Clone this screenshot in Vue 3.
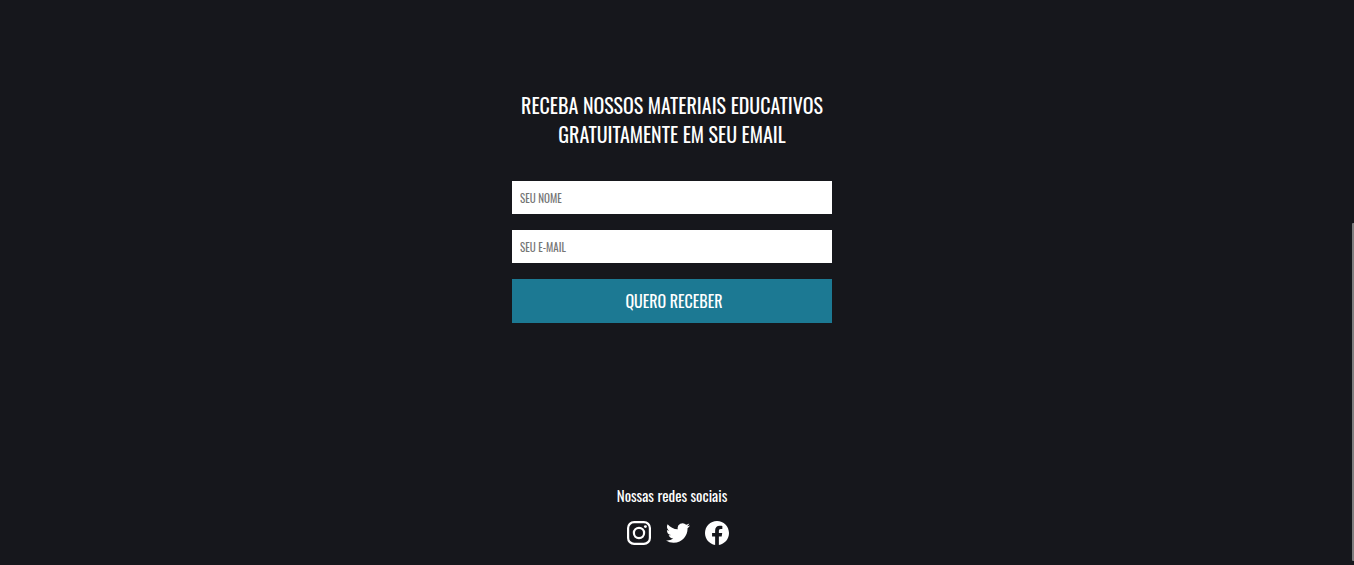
<script setup>
import { ref } from 'vue'

const name = ref('')
const email = ref('')
</script>

<template>
  <div class="page">
    <main class="newsletter">
      <h1 class="title">Receba nossos materiais educativos gratuitamente em seu email</h1>
      <form class="form" @submit.prevent>
        <input v-model="name" class="field" type="text" placeholder="SEU NOME" aria-label="Seu nome" />
        <input v-model="email" class="field" type="email" placeholder="SEU E-MAIL" aria-label="Seu e-mail" />
        <button class="submit" type="submit">QUERO RECEBER</button>
      </form>
    </main>
    <footer class="social">
      <p class="social-title">Nossas redes sociais</p>
      <nav class="links" aria-label="Nossas redes sociais">
        <a href="#" aria-label="Instagram">
          <svg viewBox="0 0 24 24" fill="none" stroke="currentColor">
            <rect x="1.1" y="1.1" width="21.8" height="21.8" rx="6" stroke-width="2.2" />
            <circle cx="12" cy="12" r="5.1" stroke-width="2.2" />
            <circle cx="18.4" cy="5.6" r="1.45" fill="currentColor" stroke="none" />
          </svg>
        </a>
        <a href="#" aria-label="Twitter">
          <svg viewBox="0 0 24 24" fill="currentColor">
            <path d="M23.954 4.569a10 10 0 0 1-2.825.775 4.958 4.958 0 0 0 2.163-2.723 9.99 9.99 0 0 1-3.127 1.184 4.92 4.92 0 0 0-8.384 4.482C7.691 8.094 4.066 6.13 1.64 3.161a4.822 4.822 0 0 0-.666 2.475c0 1.71.87 3.213 2.188 4.096a4.904 4.904 0 0 1-2.228-.616v.061a4.923 4.923 0 0 0 3.946 4.827 4.996 4.996 0 0 1-2.212.085 4.937 4.937 0 0 0 4.604 3.417 9.868 9.868 0 0 1-6.102 2.105c-.39 0-.779-.023-1.17-.067a13.995 13.995 0 0 0 7.557 2.209c9.054 0 13.999-7.496 13.999-13.986 0-.209 0-.42-.015-.63a9.936 9.936 0 0 0 2.46-2.548z" />
          </svg>
        </a>
        <a href="#" aria-label="Facebook">
          <svg viewBox="0 0 24 24" fill="currentColor">
            <path d="M24 12.073C24 5.405 18.627 0 12 0S0 5.405 0 12.073C0 18.1 4.388 23.094 10.125 24v-8.437H7.078v-3.49h3.047v-2.66c0-3.025 1.792-4.697 4.533-4.697 1.312 0 2.686.236 2.686.236v2.971H15.83c-1.491 0-1.956.93-1.956 1.886v2.264h3.328l-.532 3.49h-2.796V24C19.612 23.094 24 18.1 24 12.073z" />
          </svg>
        </a>
      </nav>
    </footer>
    <div class="scroll-thumb"></div>
  </div>
</template>

<style>
body {
  background: #16171c;
}
</style>

<style scoped>
.page {
  position: relative;
  box-sizing: border-box;
  min-height: 100vh;
  padding: 91px 10px 20px 0;
  display: flex;
  flex-direction: column;
  justify-content: space-between;
  align-items: center;
  color: #fff;
  font-family: Oswald, "Liberation Sans Narrow", "Liberation Sans", sans-serif;
}

.newsletter {
  width: 320px;
  max-width: 100%;
}

.title {
  margin: 0 0 32px;
  font-size: 20px;
  font-weight: 400;
  line-height: 29px;
  text-align: center;
  text-transform: uppercase;
}

.form {
  display: flex;
  flex-direction: column;
  gap: 16px;
}

.field {
  height: 33px;
  box-sizing: border-box;
  padding: 0 8px;
  border: 0;
  border-radius: 0;
  background: #fff;
  color: #333;
  font-family: inherit;
  font-size: 11px;
}

.field::placeholder {
  color: #757575;
  opacity: 1;
}

.submit {
  height: 44px;
  padding: 0 0 0 4px;
  border: 0;
  background: #1c7993;
  color: #fff;
  font-family: inherit;
  font-size: 16px;
}

.social {
  display: flex;
  flex-direction: column;
  align-items: center;
}

.social-title {
  margin: 0 0 14px;
  font-size: 15px;
  line-height: 24px;
}

.links {
  display: flex;
  gap: 15px;
  padding-left: 12px;
}

.links a {
  color: #fff;
}

.links svg {
  display: block;
  width: 24px;
  height: 24px;
}

.scroll-thumb {
  position: absolute;
  top: 223px;
  right: 0;
  bottom: 4px;
  width: 2px;
  border-radius: 1px 0 0 1px;
  background: #7e7e7f;
}
</style>
